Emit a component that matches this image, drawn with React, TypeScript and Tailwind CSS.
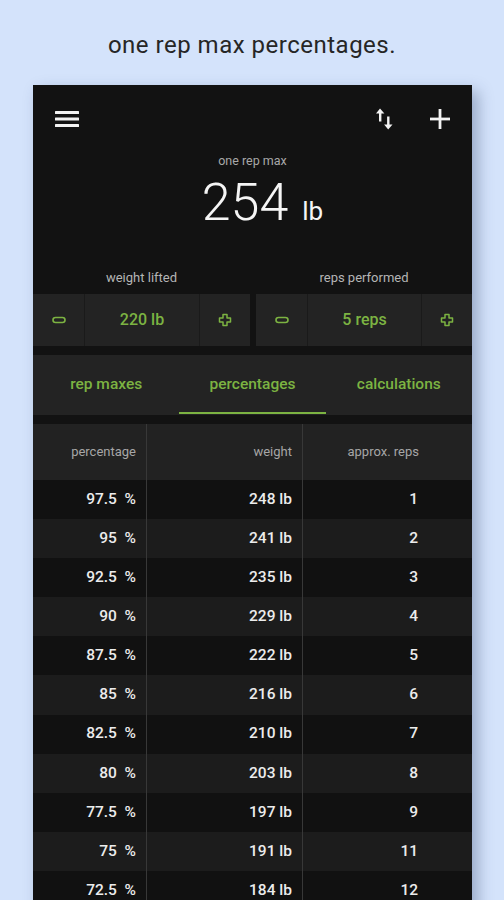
import React from 'react';

const ROWS: [string, string, string][] = [
  ['97.5', '248', '1'],
  ['95', '241', '2'],
  ['92.5', '235', '3'],
  ['90', '229', '4'],
  ['87.5', '222', '5'],
  ['85', '216', '6'],
  ['82.5', '210', '7'],
  ['80', '203', '8'],
  ['77.5', '197', '9'],
  ['75', '191', '11'],
  ['72.5', '184', '12'],
];

const MinusIcon = () => (
  <svg width="14" height="8" viewBox="0 0 14 8">
    <rect x="1" y="1.5" width="12" height="5" rx="2.5" fill="none" stroke="#7cb342" strokeWidth="1.6" />
  </svg>
);

const PlusIcon = () => (
  <svg width="14" height="14" viewBox="0 0 14 14">
    <path
      d="M5 1.5h4v3.5h3.5v4H9v3.5H5V9H1.5V5H5z"
      fill="none"
      stroke="#7cb342"
      strokeWidth="1.5"
      strokeLinejoin="round"
    />
  </svg>
);

const Stepper = ({ label, value }: { label: string; value: string }) => (
  <div className="flex flex-col">
    <div className="h-[16px] text-center text-[13px] leading-[16px] text-[#b5b5b5]">{label}</div>
    <div className="mt-[8px] flex h-[52px] bg-[#232323]">
      <div className="flex w-[52px] items-center justify-center border-r border-[#1a1a1a]">
        <MinusIcon />
      </div>
      <div className="flex flex-1 items-center justify-center border-r border-[#1a1a1a] text-[16px] font-medium text-[#7cb342]">
        {value}
      </div>
      <div className="flex w-[50px] items-center justify-center">
        <PlusIcon />
      </div>
    </div>
  </div>
);

export default function App() {
  return (
    <div className="h-[900px] overflow-hidden bg-[#d4e3fb] font-['Roboto',sans-serif]">
      <div className="flex h-[85px] items-start justify-center pt-[30px]">
        <p className="text-[24px] leading-[30px] tracking-[0.5px] text-[#262626]">one rep max percentages.</p>
      </div>

      <div className="ml-[33px] w-[439px] bg-[#121212] shadow-[6px_6px_14px_rgba(40,60,100,0.35)]">
        {/* toolbar */}
        <div className="flex h-[68px] items-center px-[22px]">
          <svg width="24" height="18" viewBox="0 0 24 18">
            <rect x="0" y="1" width="24" height="3" rx="0.5" fill="#f2f2f2" />
            <rect x="0" y="7.5" width="24" height="3" rx="0.5" fill="#f2f2f2" />
            <rect x="0" y="14" width="24" height="3" rx="0.5" fill="#f2f2f2" />
          </svg>
          <div className="flex-1" />
          <svg width="20" height="24" viewBox="0 0 20 24" className="mr-[35px]">
            <path d="M5 1.5L1 6.5h3v8h2.4v-8h3z" fill="#f2f2f2" />
            <path d="M13.2 22.5L17.5 17.5h-3v-8h-2.4v8h-3z" fill="#f2f2f2" />
          </svg>
          <svg width="20" height="20" viewBox="0 0 20 20">
            <rect x="8.6" y="0" width="2.8" height="20" fill="#f2f2f2" />
            <rect x="0" y="8.6" width="20" height="2.8" fill="#f2f2f2" />
          </svg>
        </div>

        {/* one rep max */}
        <div className="text-center text-[12.5px] leading-[16px] text-[#a8a8a8]">one rep max</div>
        <div className="mt-[6px] flex h-[56px] items-baseline justify-center pl-[20px] text-[#f5f5f5]">
          <span className="text-[52px] leading-[56px] font-light">254</span>
          <span className="ml-[14px] text-[26px]">lb</span>
        </div>

        {/* steppers */}
        <div className="mt-[39px] grid grid-cols-[217px_216px] gap-[6px]">
          <Stepper label="weight lifted" value="220 lb" />
          <Stepper label="reps performed" value="5 reps" />
        </div>

        {/* tabs */}
        <div className="mt-[9px] flex h-[60px] bg-[#232323]">
          {['rep maxes', 'percentages', 'calculations'].map((t, i) => (
            <div key={t} className="relative flex flex-1 items-center justify-center text-[15.5px] font-medium text-[#7cb342]">
              {t}
              {i === 1 && <div className="absolute bottom-[1px] left-0 right-0 h-[2px] bg-[#7cb342]" />}
            </div>
          ))}
        </div>

        {/* table */}
        <div className="mt-[9px]">
          <div className="grid h-[56px] grid-cols-[114px_156px_169px] bg-[#222222] text-[13px] text-[#a6a6a6]">
            <div className="flex items-center justify-end border-r border-[#383838] pr-[10px]">percentage</div>
            <div className="flex items-center justify-end border-r border-[#383838] pr-[10px]">weight</div>
            <div className="flex items-center justify-end pr-[53px]">approx. reps</div>
          </div>
          {ROWS.map(([p, w, r], i) => (
            <div
              key={p}
              className={`grid h-[39.1px] grid-cols-[114px_156px_169px] text-[15.5px] font-medium text-[#ececec] ${
                i % 2 === 0 ? 'bg-[#111111]' : 'bg-[#1c1c1c]'
              }`}
            >
              <div className="flex items-center justify-end border-r border-[#383838] pr-[10px]">
                {p}&nbsp;&nbsp;%
              </div>
              <div className="flex items-center justify-end border-r border-[#383838] pr-[10px]">{w} lb</div>
              <div className="flex items-center justify-end pr-[54px]">{r}</div>
            </div>
          ))}
        </div>
      </div>
    </div>
  );
}
